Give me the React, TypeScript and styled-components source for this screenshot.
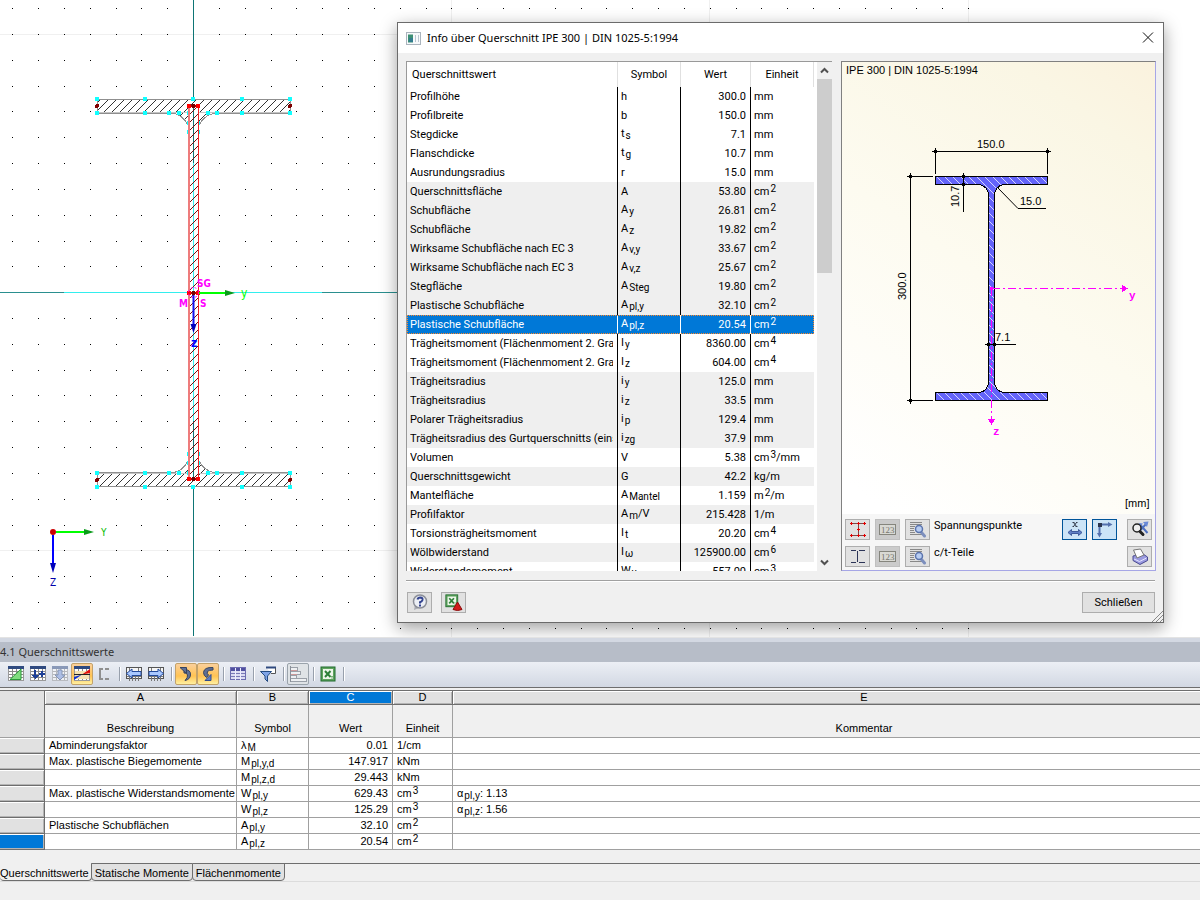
import React from "react";
import styled, { createGlobalStyle, css } from "styled-components";

const UI_FONT = `Roboto, "DejaVu Sans Condensed", sans-serif`;
const TITLE_FONT = `"Noto Sans", "Open Sans", sans-serif`;
const SANS = `"Liberation Sans", Arial, sans-serif`;

const GlobalStyle = createGlobalStyle`
  * { box-sizing: border-box; }
  body { margin: 0; background: #f0f0f0; color: #000; font: 11px/16px ${UI_FONT}; }
  button { font: inherit; color: inherit; margin: 0; padding: 0; }
`;

const Page = styled.div`
  display: flex;
  flex-direction: column;
  min-height: 100vh;
  overflow: hidden;
`;

/* ---------- shared pieces ---------- */

const Sub = styled.sub`
  font-size: 10px;
  line-height: 0;
  vertical-align: -2px;
  margin-left: 1px;
`;
const Sup = styled.sup`
  font-size: 10px;
  line-height: 0;
  vertical-align: 3px;
  margin-left: 1px;
`;

/* "A_pl,z" gives a subscript, "cm^2" a superscript, "|" ends either of them */
function Rich({ text }: { text: string }) {
  const m = text.match(/^([^_^]*)([_^])([^|]*)\|?(.*)$/);
  if (!m) return <>{text}</>;
  const Part = m[2] === "_" ? Sub : Sup;
  return (
    <>
      {m[1]}
      <Part>{m[3]}</Part>
      {m[4]}
    </>
  );
}

/* ---------- drawing area ---------- */

const Workspace = styled.main`
  position: relative;
  flex: 1 0 638px;
  background: #fff;
  border-bottom: 1px solid #e3e3e3;
  overflow: hidden;
`;
const Canvas = styled.svg`
  display: block;
  position: absolute;
  inset: 0;
  width: 100%;
  height: 100%;
`;

const dotsX = Array.from({ length: 38 }, (_, i) => Math.round(193.1 + 25.83 * (i - 7)));
const dotsY = Array.from({ length: 25 }, (_, i) => Math.round(8.15 + 25.82 * i));

const handles: [number, number][] = [
  [97, 99], [145, 99], [193, 99], [242, 99], [290, 99],
  [97, 113], [145, 113], [169, 113], [179, 113], [208, 113], [217, 113], [242, 113], [290, 113],
  [189, 123], [198, 123], [189, 132], [198, 132], [193, 113], [189, 113],
];

const FLANGE = "M97.5 99.5H290.5V113.5H214Q204 115 198.5 126V113.5H188.5V126Q183 115 174 113.5H97.5Z";

function Flange({ hatch }: { hatch: string }) {
  return (
    <g>
      <path d={FLANGE} fill="#fff" />
      <path d={FLANGE} fill={`url(#${hatch})`} stroke="#8f8f8f" />
      <path d="M97 112.5H290" stroke="#c4c4c4" />
      {handles.map(([x, y]) => (
        <rect key={`${x}-${y}`} x={x - 2} y={y - 2} width="4" height="4" fill="#1ff" />
      ))}
      <circle cx="97" cy="106" r="2" fill="#800000" />
      <circle cx="290" cy="106" r="2" fill="#800000" />
    </g>
  );
}

function ModelCanvas() {
  return (
    <Canvas shapeRendering="crispEdges">
      <defs>
        <pattern id="hatch" width="8" height="8" patternUnits="userSpaceOnUse">
          <path d="M-1 9L9 -1M-1 1L1 -1M7 9L9 7" stroke="#333" strokeWidth="1" />
        </pattern>
        <pattern id="hatchMirrored" width="8" height="8" patternUnits="userSpaceOnUse">
          <path d="M-1 -1L9 9M-1 7L1 9M7 -1L9 1" stroke="#333" strokeWidth="1" />
        </pattern>
        <pattern id="webHatch" width="8" height="8" patternUnits="userSpaceOnUse">
          <path d="M-1 9L9 -1M-1 1L1 -1M7 9L9 7" stroke="#7c0a0a" strokeWidth="1" />
        </pattern>
      </defs>
      <path d="M0 34.5H968M0 550.5H968M451.5 0V638M709.5 0V638M968.5 0V638" stroke="#f0f0f0" />
      {dotsX.map((x) => dotsY.map((y) => <rect key={`${x}/${y}`} x={x} y={y} width="1" height="1" />))}
      <path d="M0 292.5H420" stroke="#2a8f8f" />
      <path d="M64 292.5H322" stroke="#3ee" />
      <path d="M193.5 0V636" stroke="#0e7575" />

      <Flange hatch="hatch" />
      <g transform="translate(0 586) scale(1 -1)">
        <Flange hatch="hatchMirrored" />
      </g>

      <rect x="189" y="106" width="9" height="373" fill="#fff" />
      <path d="M193.5 106V163M193.5 421V479" stroke="#0e7575" />
      <path d="M193.5 163V421" stroke="#3ee" />
      <rect x="189" y="106" width="9" height="373" fill="url(#webHatch)" />
      <path d="M189 106V479" stroke="#ee7c7c" strokeWidth="2" />
      <path d="M198.5 106V479" stroke="#e22" />
      {[106, 293, 479].map((y) => (
        <g key={y}>
          <rect x="187" y={y - 2} width="4" height="4" fill="#f00" />
          <rect x="196" y={y - 2} width="4" height="4" fill="#f00" />
          <path d={`M191 ${y}H196`} stroke="#a00" strokeWidth="2" />
          <circle cx="193.5" cy={y} r="2" fill="#700" />
        </g>
      ))}

      <g shapeRendering="auto">
        <circle cx="193.5" cy="292.5" r="5" fill="none" stroke="#f0f" strokeDasharray="2 2" />
        <path d="M199 293H226" stroke="#0f0" strokeWidth="2" />
        <path d="M225 290L235 293L225 296Z" fill="#0a9a1a" />
        <path d="M193.5 295V326" stroke="#11e" strokeWidth="2" />
        <path d="M190.5 324L193.5 333L196.5 324Z" fill="#00b" />
        <path d="M56 532H86" stroke="#0f0" strokeWidth="2" />
        <path d="M84 529L94 532L84 535Z" fill="#0a9a1a" />
        <path d="M53 535V565" stroke="#00f" strokeWidth="2" />
        <path d="M50 563L53 573L56 563Z" fill="#00b" />
        <circle cx="53" cy="532" r="3" fill="#c00" />
      </g>
      <g fontFamily={`"DejaVu Sans Condensed", sans-serif`} fontSize="10">
        <g fill="#f0f" fontWeight="700">
          <text x="197" y="287">SG</text>
          <text x="179" y="307">M</text>
          <text x="200" y="307">S</text>
        </g>
        <text x="241" y="297" fill="#0f0" fontSize="12">y</text>
        <text x="191" y="347" fill="#00f" fontSize="12" fontWeight="700">z</text>
        <text x="101" y="536" fill="#0b0">Y</text>
        <text x="50" y="586" fill="#00a">Z</text>
      </g>
    </Canvas>
  );
}

/* ---------- dialog ---------- */

const Dialog = styled.section`
  position: absolute;
  top: 22px;
  left: 397px;
  right: 36px;
  min-width: 700px;
  background: #f0f0f0;
  border: 1px solid #6b6b6b;
  box-shadow: 0 5px 16px rgba(0, 0, 0, 0.38);
`;
const TitleBar = styled.header`
  display: flex;
  align-items: center;
  height: 30px;
  padding: 0 7px 0 8px;
  background: #fff;
`;
const DialogTitle = styled.h1`
  flex: 1;
  margin: 0 0 0 6px;
  font: 11px/16px ${TITLE_FONT};
`;
const CloseButton = styled.button`
  width: 16px;
  height: 16px;
  border: 0;
  background: none;
  display: grid;
  place-items: center;
`;
const DialogBody = styled.div`
  display: flex;
  gap: 9px;
  padding: 8px 7px 0 8px;
`;
const ListFrame = styled.div`
  flex: 0 0 426px;
  height: 510px;
  display: flex;
  justify-content: space-between;
  overflow: hidden;
  background: #fff;
  border-top: 1px solid #999;
  border-left: 1px solid #999;
`;
const ValueTable = styled.table`
  width: 407px;
  align-self: flex-start;
  table-layout: fixed;
  border-collapse: separate;
  border-spacing: 0;
`;
const HeadCell = styled.th<{ $left?: boolean }>`
  height: 25px;
  padding: 0 5px;
  border-right: 1px solid #e0e0e0;
  font-weight: 400;
  text-align: ${(p) => (p.$left ? "left" : "center")};
`;
const ValueRow = styled.tr<{ $tone: string }>`
  height: 19px;
  background: ${(p) => (p.$tone === "g" ? "#efefef" : "#fff")};
  ${(p) =>
    p.$tone === "s" &&
    css`
      background: #0078d7;
      color: #fff;
      outline: 1px dotted #ff8728;
      outline-offset: -1px;
      td { border-color: #fff; }
    `}
`;
const ValueCell = styled.td<{ $end?: boolean; $last?: boolean; $raised?: boolean }>`
  padding: 0 4px 0 3px;
  border-right: ${(p) => (p.$last ? "0" : "1px solid #000")};
  text-align: ${(p) => (p.$end ? "right" : "left")};
  line-height: ${(p) => (p.$raised ? "17px" : "19px")};
  white-space: nowrap;
  vertical-align: top;
`;
const Clip = styled.div`
  height: 19px;
  overflow: hidden;
`;
const ScrollBar = styled.div`
  width: 15px;
  display: flex;
  flex-direction: column;
  background: #f0f0f0;
`;
const ScrollArrow = styled.button`
  height: 17px;
  border: 0;
  background: none;
  display: grid;
  place-items: center;
`;
const ScrollTrack = styled.div`
  flex: 1;
`;
const ScrollThumb = styled.div`
  height: 194px;
  background: #cdcdcd;
`;

const PreviewFrame = styled.div`
  flex: 1;
  display: flex;
  flex-direction: column;
  background: #f6f6f6;
  border: 1px solid #808080;
  border-right-color: #a6a6e6;
  border-bottom-color: #a6a6e6;
`;
const Preview = styled.svg`
  display: block;
  width: 100%;
  flex: 1;
  background: linear-gradient(35deg, #fff 5%, #fdfbf0 50%, #faf6e4 85%, #faf2de 100%);
`;
const PreviewTools = styled.div`
  display: flex;
  flex-direction: column;
  gap: 6px;
  padding: 5px 3px 3px;
`;
const ToolLine = styled.div`
  display: flex;
  gap: 5px;
`;
const ToolCaption = styled.span`
  flex: 1;
  margin-left: -1px;
  line-height: 14px;
`;
const SmallButton = styled.button<{ $tone?: "on" | "off"; $apart?: boolean }>`
  width: 25px;
  height: 21px;
  margin-left: ${(p) => (p.$apart ? "5px" : "0")};
  display: grid;
  place-items: center;
  background: ${(p) => (p.$tone === "on" ? "#cce4f7" : p.$tone === "off" ? "#cbcbcb" : "#e1e1e1")};
  border: 1px solid ${(p) => (p.$tone === "on" ? "#005499" : p.$tone === "off" ? "#bfbfbf" : "#adadad")};
`;
const DialogFooter = styled.footer`
  display: flex;
  gap: 9px;
  margin: 9px 8px 0;
  padding: 11px 0 9px 1px;
  border-top: 1px solid #a0a0a0;
  box-shadow: inset 0 1px #fff;
`;
const Spacer = styled.div`
  flex: 1;
`;
const TextButton = styled.button`
  width: 73px;
  height: 21px;
  background: #e1e1e1;
  border: 1px solid #adadad;
  line-height: 19px;
`;
const Grip = styled.svg`
  position: absolute;
  right: 0;
  bottom: 0;
`;

const values: [string, string, string, string, string][] = [
  ["Profilhöhe", "h", "300.0", "mm", "w"],
  ["Profilbreite", "b", "150.0", "mm", "w"],
  ["Stegdicke", "t_s", "7.1", "mm", "w"],
  ["Flanschdicke", "t_g", "10.7", "mm", "w"],
  ["Ausrundungsradius", "r", "15.0", "mm", "w"],
  ["Querschnittsfläche", "A", "53.80", "cm^2", "g"],
  ["Schubfläche", "A_y", "26.81", "cm^2", "g"],
  ["Schubfläche", "A_z", "19.82", "cm^2", "g"],
  ["Wirksame Schubfläche nach EC 3", "A_v,y", "33.67", "cm^2", "g"],
  ["Wirksame Schubfläche nach EC 3", "A_v,z", "25.67", "cm^2", "g"],
  ["Stegfläche", "A_Steg", "19.80", "cm^2", "g"],
  ["Plastische Schubfläche", "A_pl,y", "32.10", "cm^2", "g"],
  ["Plastische Schubfläche", "A_pl,z", "20.54", "cm^2", "s"],
  ["Trägheitsmoment (Flächenmoment 2. Grad", "I_y", "8360.00", "cm^4", "w"],
  ["Trägheitsmoment (Flächenmoment 2. Grad", "I_z", "604.00", "cm^4", "w"],
  ["Trägheitsradius", "i_y", "125.0", "mm", "g"],
  ["Trägheitsradius", "i_z", "33.5", "mm", "g"],
  ["Polarer Trägheitsradius", "i_p", "129.4", "mm", "g"],
  ["Trägheitsradius des Gurtquerschnitts (eins", "i_zg", "37.9", "mm", "g"],
  ["Volumen", "V", "5.38", "cm^3|/mm", "w"],
  ["Querschnittsgewicht", "G", "42.2", "kg/m", "g"],
  ["Mantelfläche", "A_Mantel", "1.159", "m^2|/m", "w"],
  ["Profilfaktor", "A_m|/V", "215.428", "1/m", "g"],
  ["Torsionsträgheitsmoment", "I_t", "20.20", "cm^4", "w"],
  ["Wölbwiderstand", "I_ω", "125900.00", "cm^6", "g"],
  ["Widerstandsmoment", "W_y", "557.00", "cm^3", "w"],
];

const dimensionTicks = [[935, 151], [1047, 151], [910, 176], [910, 400], [963, 176], [963, 184], [988, 344], [994, 344]];

function SectionPreview() {
  return (
    <Preview viewBox="842 62 313 452" shapeRendering="crispEdges">
      <defs>
        <pattern id="blueHatch" width="8" height="8" patternUnits="userSpaceOnUse">
          <rect width="8" height="8" fill="#6464fa" />
          <path d="M-1 -1L9 9M-1 7L1 9M7 -1L9 1" stroke="#d4d4ff" strokeWidth="1" shapeRendering="auto" />
        </pattern>
      </defs>
      <path
        d="M935.5 176.5H1047.5V184.5H1003Q995 187 994.5 194.5V383Q996 391 1003 392.5H1047.5V400.5H935.5V392.5H980Q987 391 988.5 383V194.5Q988 187 980 184.5H935.5Z"
        fill="url(#blueHatch)"
        stroke="#000"
      />
      <g stroke="#000" fill="none">
        <path d="M932 151.5H1051M935.5 148V174M1047.5 148V174" />
        <path d="M910.5 173V404M907 176.5H933M907 400.5H933" />
        <path d="M963.5 173V212" />
        <path d="M985 344.5H1016" />
        <path d="M998 188L1018 208.5H1046" shapeRendering="auto" />
      </g>
      {dimensionTicks.map(([x, y]) => (
        <path key={`${x}-${y}`} d={`M${x - 2} ${y + 0.5}L${x + 0.5} ${y - 2}L${x + 3} ${y + 0.5}L${x + 0.5} ${y + 3}Z`} />
      ))}
      <g stroke="#f0f" fill="none">
        <path d="M991.5 288.5H1122" strokeDasharray="8 3 2 3" />
        <path d="M991.5 288V420" strokeDasharray="8 3 2 3" />
      </g>
      <g fill="#f0f">
        <rect x="990" y="287" width="3" height="3" />
        <path d="M1122 285V292L1128 288.5Z" />
        <path d="M988 419H995L991.5 425Z" />
      </g>
      <g fontFamily={SANS} fontSize="11">
        <text x="846" y="74">IPE 300 | DIN 1025-5:1994</text>
        <text x="977" y="148">150.0</text>
        <text x="1020" y="205">15.0</text>
        <text x="995" y="341">7.1</text>
        <text transform="translate(906 300) rotate(-90)">300.0</text>
        <text transform="translate(959 207) rotate(-90)">10.7</text>
        <text x="1125" y="507">[mm]</text>
      </g>
      <g fill="#f0f" fontFamily={`"Liberation Mono", monospace`} fontSize="11" fontWeight="700">
        <text x="1129" y="299">y</text>
        <text x="993" y="435">z</text>
      </g>
    </Preview>
  );
}

const IconStress = () => (
  <svg width="18" height="17" shapeRendering="crispEdges">
    <path d="M1 2.5H17M1 14.5H17M9.5 3V14" stroke="#7a4a4a" fill="none" />
    {[[2, 2], [9, 2], [15, 2], [2, 14], [9, 14], [15, 14], [9, 8]].map(([x, y]) => (
      <path key={`${x}-${y}`} d={`M${x - 1} ${y + 0.5}H${x + 2}M${x + 0.5} ${y - 1}V${y + 2}`} stroke="#e00000" />
    ))}
  </svg>
);
const IconParts = () => (
  <svg width="18" height="17" shapeRendering="crispEdges">
    <path d="M2 2.5H7M10 2.5H16M2 14.5H7M10 14.5H16M8.5 3V14" stroke="#2c3558" fill="none" />
  </svg>
);
const IconNumber = () => (
  <svg width="17" height="12">
    <rect x="0.5" y="0.5" width="16" height="10" fill="#d9d9d4" stroke="#85857d" />
    <text x="2" y="9" fontFamily={`"Liberation Serif", serif`} fontSize="9" fill="#75756d">123</text>
  </svg>
);
const IconDetails = () => (
  <svg width="18" height="17">
    <path d="M1 1.5H13M1 3.5H13M1 5.5H6M1 7.5H5M1 9.5H5M1 11.5H6M1 13.5H13" stroke="#888" fill="none" />
    <path d="M12.5 11.5L15.5 15" stroke="#7d8fbd" strokeWidth="3" strokeLinecap="round" />
    <circle cx="10" cy="8" r="3.5" fill="#b8cdf2" stroke="#5b74ad" strokeWidth="1.5" />
  </svg>
);
const IconDimension = () => (
  <svg width="18" height="17">
    <path d="M7.5 1.5L10.5 5.5M10.5 1.5L7.5 5.5M6.5 1.5H8.5M10 1.5H11.5M6.5 5.5H8M9.5 5.5H11.5" stroke="#333a4a" fill="none" />
    <path d="M2 11.5L5.5 8.5V10.5H12.5V8.5L16 11.5L12.5 14.5V12.5H5.5V14.5Z" fill="#5f7fc6" stroke="#3d5a9c" />
  </svg>
);
const IconAxes = () => (
  <svg width="18" height="17">
    <path d="M4 3.5H13M3.5 4V13" stroke="#5570ae" strokeWidth="2" fill="none" />
    <path d="M12 1L16.5 3.5L12 6ZM1 12L3.5 16.5L6 12Z" fill="#5570ae" />
    <rect x="2" y="2" width="4" height="4" fill="#2c3550" />
  </svg>
);
const IconFit = () => (
  <svg width="18" height="17">
    <path d="M9 3.5L16.5 12M16 2L9.5 9" stroke="#4c6fc0" strokeWidth="2" fill="none" />
    <path d="M12 1L17.5 0.5L16 6ZM8 2L12 2.5L9 6Z" fill="#6a8ad8" />
    <circle cx="6" cy="7" r="4" fill="#f4f4f4" fillOpacity="0.7" stroke="#222" strokeWidth="1.5" />
    <path d="M9 10.5L12 13.5" stroke="#222" strokeWidth="3" strokeLinecap="round" />
  </svg>
);
const IconPrint = () => (
  <svg width="18" height="17">
    <path d="M2 8L12 6L16.5 9V12.5L9 16.5L2 12.5Z" fill="#9a9ae0" stroke="#4a4a90" />
    <path d="M2.5 2L9.5 1L13 7L6 10Z" fill="#fff" stroke="#777" />
    <path d="M3 11L8.5 13.5L15.5 10" stroke="#e5e5ff" fill="none" />
  </svg>
);
const IconHelp = () => (
  <svg width="18" height="17">
    <path d="M4 11L3 16L9 13.5Z" fill="#a9acb4" />
    <circle cx="9" cy="7.5" r="6.5" fill="#eceff5" stroke="#8c8f98" strokeWidth="1.5" />
    <path d="M6.5 5.5Q7 3.5 9.3 3.5Q12 3.7 11.5 6Q11 7.5 9 8.3V9.5M9 10.5V12.5" stroke="#33438f" strokeWidth="2" fill="none" />
  </svg>
);
const ExcelShape = () => (
  <g>
    <rect x="1" y="1" width="14" height="14" fill="#5fa45f" stroke="#1f6b2c" />
    <rect x="3" y="3" width="10" height="10" fill="#eef6ea" />
    <path d="M5 5L10.5 11M10.5 5L5 11" stroke="#2d7f38" strokeWidth="2" />
    <path d="M11 10.5H13M11 12H13" stroke="#7ab07a" />
  </g>
);
const IconExcelExport = () => (
  <svg width="18" height="17">
    <g transform="scale(0.85)">
      <ExcelShape />
    </g>
    <path d="M12.5 8L17 15.5Q12.5 17.5 8 15.5Z" fill="#d21a1a" stroke="#8c0d0d" />
  </svg>
);
const IconWindow = () => (
  <svg width="15" height="13">
    <rect x="0.5" y="0.5" width="14" height="12" fill="#f7f9fb" stroke="#aab4bd" />
    <rect x="2" y="2.5" width="5" height="8" fill="#3d8f74" />
    <rect x="3" y="6" width="4" height="4" fill="#2c6fa0" opacity="0.6" />
    <path d="M9.5 3V10M12.5 3V10" stroke="#b9c6d0" />
  </svg>
);
const Chevron = ({ up }: { up?: boolean }) => (
  <svg width="9" height="7">
    <path d={up ? "M1 5.5L4.5 2L8 5.5" : "M1 1.5L4.5 5L8 1.5"} stroke="#505050" strokeWidth="2" fill="none" />
  </svg>
);

function InfoDialog() {
  return (
    <Dialog role="dialog" aria-label="Info über Querschnitt">
      <TitleBar>
        <IconWindow />
        <DialogTitle>Info über Querschnitt IPE 300 | DIN 1025-5:1994</DialogTitle>
        <CloseButton aria-label="Fenster schließen">
          <svg width="12" height="12">
            <path d="M1 0.5L11 10.5M11 0.5L1 10.5" stroke="#111" />
          </svg>
        </CloseButton>
      </TitleBar>
      <DialogBody>
        <ListFrame>
          <ValueTable>
            <colgroup>
              <col style={{ width: 211 }} />
              <col style={{ width: 63 }} />
              <col style={{ width: 70 }} />
              <col />
            </colgroup>
            <thead>
              <tr>
                <HeadCell $left>Querschnittswert</HeadCell>
                <HeadCell>Symbol</HeadCell>
                <HeadCell>Wert</HeadCell>
                <HeadCell>Einheit</HeadCell>
              </tr>
            </thead>
            <tbody>
              {values.map(([name, symbol, value, unit, tone], i) => (
                <ValueRow key={i} $tone={tone}>
                  <ValueCell><Clip>{name}</Clip></ValueCell>
                  <ValueCell $raised={symbol.includes("_")}><Rich text={symbol} /></ValueCell>
                  <ValueCell $end>{value}</ValueCell>
                  <ValueCell $last><Rich text={unit} /></ValueCell>
                </ValueRow>
              ))}
            </tbody>
          </ValueTable>
          <ScrollBar>
            <ScrollArrow aria-label="Nach oben"><Chevron up /></ScrollArrow>
            <ScrollTrack><ScrollThumb /></ScrollTrack>
            <ScrollArrow aria-label="Nach unten"><Chevron /></ScrollArrow>
          </ScrollBar>
        </ListFrame>
        <PreviewFrame>
          <SectionPreview />
          <PreviewTools>
            <ToolLine>
              <SmallButton aria-label="Spannungspunkte anzeigen"><IconStress /></SmallButton>
              <SmallButton aria-label="Nummern" $tone="off"><IconNumber /></SmallButton>
              <SmallButton aria-label="Details"><IconDetails /></SmallButton>
              <ToolCaption>Spannungspunkte</ToolCaption>
              <SmallButton aria-label="Bemaßung" $tone="on"><IconDimension /></SmallButton>
              <SmallButton aria-label="Achsen" $tone="on"><IconAxes /></SmallButton>
              <SmallButton aria-label="Alles zeigen" $apart><IconFit /></SmallButton>
            </ToolLine>
            <ToolLine>
              <SmallButton aria-label="c/t-Teile anzeigen"><IconParts /></SmallButton>
              <SmallButton aria-label="Nummern" $tone="off"><IconNumber /></SmallButton>
              <SmallButton aria-label="Details"><IconDetails /></SmallButton>
              <ToolCaption>c/t-Teile</ToolCaption>
              <SmallButton aria-label="Drucken"><IconPrint /></SmallButton>
            </ToolLine>
          </PreviewTools>
        </PreviewFrame>
      </DialogBody>
      <DialogFooter>
        <SmallButton aria-label="Hilfe"><IconHelp /></SmallButton>
        <SmallButton aria-label="Excel-Export"><IconExcelExport /></SmallButton>
        <Spacer />
        <TextButton>Schließen</TextButton>
      </DialogFooter>
      <Grip width="12" height="12">
        <path d="M1 12L12 1M5 12L12 5M9 12L12 9" stroke="#888" />
      </Grip>
    </Dialog>
  );
}

/* ---------- table panel ---------- */

const Panel = styled.section`
  border-top: 4px solid #d3d8e2;
`;
const PanelTitle = styled.h2`
  margin: 0;
  height: 20px;
  background: #b7bdc8;
  color: #333;
  font: 11px/20px ${TITLE_FONT};
`;
const Toolbar = styled.div`
  display: flex;
  align-items: center;
  height: 26px;
  padding: 0 5px 1px;
  background: linear-gradient(#eceff5, #d2d8e3);
  border-bottom: 1px solid #6e6e6e;
`;
const ToolButton = styled.button<{ $look?: "active" | "pressed" }>`
  width: 22px;
  height: 22px;
  display: grid;
  place-items: center;
  border: 1px solid transparent;
  border-radius: 2px;
  background: none;
  ${(p) =>
    p.$look === "active" &&
    css`
      background: linear-gradient(#fbd09c, #ffc353 60%, #fff0a0);
      border-color: #c3a26a;
    `}
  ${(p) =>
    p.$look === "pressed" &&
    css`
      background: #dfe3e6;
      border-color: #9aa3ab;
    `}
`;
const ToolSeparator = styled.div`
  width: 8px;
  height: 14px;
  background: linear-gradient(#98a0ac, #98a0ac) 4px 0 / 1px 100% no-repeat, linear-gradient(#fff, #fff) 5px 0 / 1px 100% no-repeat;
`;

const GridScroller = styled.div`
  margin-top: 2px;
  overflow: hidden;
`;
const Grid = styled.table`
  width: calc(100% + 76px);
  table-layout: fixed;
  border-collapse: separate;
  border-spacing: 0;
  border-top: 1px solid #6e6e6e;
  font: 11px/15px ${SANS};
`;
const Letter = styled.th<{ $on?: boolean }>`
  height: 14px;
  padding: 0;
  font-weight: 400;
  line-height: 13px;
  background: ${(p) => (p.$on ? "#0078d7" : "#e1e1e1")};
  color: ${(p) => (p.$on ? "#fff" : "#000")};
  border-right: 1px solid #6e6e6e;
  border-bottom: 1px solid #6e6e6e;
  box-shadow: inset 1px 1px #fff, inset -1px -1px #b4b4b4;
`;
const Corner = styled.th`
  padding: 0;
  background: #e1e1e1;
  border-right: 1px solid #6e6e6e;
  border-bottom: 1px solid #a0a0a0;
`;
const Caption = styled.th`
  height: 33px;
  padding: 0 0 1px;
  vertical-align: bottom;
  font-weight: 400;
  border-right: 1px solid #a0a0a0;
  border-bottom: 1px solid #a0a0a0;
`;
const RowHead = styled.th<{ $on?: boolean }>`
  padding: 0;
  background: ${(p) => (p.$on ? "#0078d7" : "#e1e1e1")};
  border-right: 1px solid #6e6e6e;
  border-bottom: 1px solid #6e6e6e;
  box-shadow: inset 0 1px #fff, inset -1px -1px #b4b4b4;
`;
const Cell = styled.td<{ $end?: boolean }>`
  height: 16px;
  padding: 0 4px;
  overflow: hidden;
  white-space: nowrap;
  vertical-align: top;
  background: #fff;
  text-align: ${(p) => (p.$end ? "right" : "left")};
  border-right: 1px solid #a0a0a0;
  border-bottom: 1px solid #a0a0a0;
`;

const Tabs = styled.nav`
  display: flex;
  margin-top: 13px;
  border-bottom: 1px solid #dcdcdc;
  font: 11px/18px ${SANS};
`;
const Tab = styled.button<{ $active?: boolean }>`
  height: 18px;
  padding: ${(p) => (p.$active ? "0 2px 0 0" : "0 3px")};
  background: ${(p) => (p.$active ? "#f0f0f0" : "#e1e1e1")};
  border: 1px solid #6e6e6e;
  border-left: ${(p) => (p.$active ? "0" : "1px solid #6e6e6e")};
  border-top-color: ${(p) => (p.$active ? "#f0f0f0" : "#6e6e6e")};
  border-radius: 0 0 4px 4px;
  margin-right: -1px;
`;
const TabRest = styled.div`
  flex: 1;
  border-top: 1px solid #6e6e6e;
`;

const rows: [string, string, string, string, string][] = [
  ["Abminderungsfaktor", "λ_M", "0.01", "1/cm", ""],
  ["Max. plastische Biegemomente", "M_pl,y,d", "147.917", "kNm", ""],
  ["", "M_pl,z,d", "29.443", "kNm", ""],
  ["Max. plastische Widerstandsmomente", "W_pl,y", "629.43", "cm^3", "α_pl,y|: 1.13"],
  ["", "W_pl,z", "125.29", "cm^3", "α_pl,z|: 1.56"],
  ["Plastische Schubflächen", "A_pl,y", "32.10", "cm^2", ""],
  ["", "A_pl,z", "20.54", "cm^2", ""],
];

const Sheet = ({ children, faded }: { children?: React.ReactNode; faded?: boolean }) => (
  <svg width="18" height="18" opacity={faded ? 0.5 : 1} shapeRendering="crispEdges">
    <rect x="1.5" y="1.5" width="15" height="14" fill="#fff" stroke="#9a9a9a" />
    <path d="M2 6.5H16M2 9.5H16M2 12.5H16M5.5 4V15M9.5 4V15M13.5 4V15" stroke="#8a8a8a" />
    <rect x="1" y="1" width="16" height="3" fill="#2f4a80" />
    {children}
  </svg>
);
const IconEdit = () => <Sheet><path d="M3 14.5L14 4V14.5Z" fill="#7fdc7f" stroke="#2a9a3a" shapeRendering="auto" /></Sheet>;
const IconInsert = () => (
  <Sheet>
    <path d="M6 5V11M10 9H16M13 6V12" stroke="#1d3f96" strokeWidth="2" fill="none" />
    <path d="M2 10H10L6 14Z" fill="#1d3f96" />
  </Sheet>
);
const IconDown = () => <Sheet faded><path d="M7 5H11V10H14L9 15L4 10H7Z" fill="#7d9be0" stroke="#2f4a80" shapeRendering="auto" /></Sheet>;
const IconDiagram = () => (
  <Sheet>
    <rect x="2" y="6" width="14" height="8" fill="#f4e2b4" />
    <path d="M1 15V12L9 9.5Z" fill="#1030d0" shapeRendering="auto" />
    <path d="M17 4V8L9 9.5Z" fill="#e01010" shapeRendering="auto" />
    <path d="M1 9.5H17" stroke="#222" />
  </Sheet>
);
const IconBracket = () => (
  <svg width="18" height="18" shapeRendering="crispEdges">
    <path d="M5 4H8M10 4H14M5 14H8M10 14H14M5 3V15" stroke="#8f8f8f" strokeWidth="2" fill="none" />
  </svg>
);
const IconMove = ({ right }: { right?: boolean }) => (
  <svg width="18" height="18">
    <g shapeRendering="crispEdges">
      <rect x="1.5" y="2.5" width="15" height="11" fill="#f5f5f5" stroke="#555" />
      <path d="M2 11.5H16M4.5 3V16M7.5 11V16M10.5 11V16M13.5 3V16" stroke="#777" />
    </g>
    <path
      d="M1.5 8.5L7 4V6.5H16V10.5H7V13Z"
      transform={right ? "translate(18 0) scale(-1 1)" : undefined}
      fill="#a9c8ff"
      stroke="#234a9c"
    />
  </svg>
);
const IconTurn = () => (
  <svg width="18" height="18">
    <path d="M7 4.5Q14 4.5 13.5 10Q13 14.5 8 15.5Q11 12.5 10.5 10Q10 7.5 7 8Z" fill="#5f6f94" stroke="#38445f" />
    <path d="M3 2.5H9.5V8.5Z" fill="#5f6f94" stroke="#38445f" />
  </svg>
);
const IconTurnDown = () => (
  <svg width="18" height="18">
    <path d="M14 2.5Q5 2 4.5 7.5Q4.5 10.5 7.5 12.5L9.5 10Q7.5 8.5 8.5 6.5Q9.5 5 14 5Z" fill="#5f6f94" stroke="#38445f" />
    <path d="M12 9.5V15.5H6Z" fill="#5f7fc6" stroke="#2f4a8c" />
  </svg>
);
const IconColumns = () => (
  <svg width="18" height="18" shapeRendering="crispEdges">
    <rect x="1.5" y="2.5" width="15" height="12" fill="#dcdcf2" stroke="#6c6cb0" />
    <path d="M2 4.5H16" stroke="#5050a0" strokeWidth="3" />
    <path d="M2 8.5H16M2 11.5H16" stroke="#7a7ab8" />
    <path d="M6.5 3V15M11.5 3V15" stroke="#eef" />
  </svg>
);
const IconFilter = () => (
  <svg width="18" height="18">
    <path d="M7.5 2.5H16.5V8.5H12" fill="#fff" stroke="#555" />
    <path d="M7 2.5H17" stroke="#2f4a80" strokeWidth="2" />
    <path d="M1.5 6.5H12.5L8.5 11V16.5L6 14V11Z" fill="#7ea3e6" stroke="#234a80" />
  </svg>
);
const IconBars = () => (
  <svg width="18" height="18" shapeRendering="crispEdges">
    <path d="M1.5 1V17" stroke="#8a9099" />
    <path d="M2 2.5H8V5.5H2M2 6.5H11V9.5H2M2 10.5H7V13.5H2M2 13.5H17V16.5H2" stroke="#9aa0a8" fill="#eef0f2" />
    <path d="M2 5.5H8M2 9.5H8" stroke="#c99" />
  </svg>
);
const IconExcel = () => <svg width="16" height="16"><ExcelShape /></svg>;

function TablePanel() {
  return (
    <Panel>
      <PanelTitle>4.1 Querschnittswerte</PanelTitle>
      <Toolbar>
        <ToolButton aria-label="Bearbeiten"><IconEdit /></ToolButton>
        <ToolButton aria-label="Zeile einfügen"><IconInsert /></ToolButton>
        <ToolButton aria-label="Nach unten kopieren"><IconDown /></ToolButton>
        <ToolButton aria-label="Diagramm" $look="active"><IconDiagram /></ToolButton>
        <ToolButton aria-label="Querschnitt"><IconBracket /></ToolButton>
        <ToolSeparator />
        <ToolButton aria-label="Vorherige Tabelle"><IconMove /></ToolButton>
        <ToolButton aria-label="Nächste Tabelle"><IconMove right /></ToolButton>
        <ToolSeparator />
        <ToolButton aria-label="Auswahl zur Grafik" $look="active"><IconTurn /></ToolButton>
        <ToolButton aria-label="Auswahl zur Tabelle" $look="active"><IconTurnDown /></ToolButton>
        <ToolSeparator />
        <ToolButton aria-label="Spalten"><IconColumns /></ToolButton>
        <ToolSeparator />
        <ToolButton aria-label="Filter"><IconFilter /></ToolButton>
        <ToolSeparator />
        <ToolButton aria-label="Balken" $look="pressed"><IconBars /></ToolButton>
        <ToolSeparator />
        <ToolButton aria-label="Excel"><IconExcel /></ToolButton>
        <ToolSeparator />
      </Toolbar>
      <GridScroller>
        <Grid>
          <colgroup>
            <col style={{ width: 45 }} />
            <col style={{ width: 192 }} />
            <col style={{ width: 72 }} />
            <col style={{ width: 84 }} />
            <col style={{ width: 60 }} />
            <col />
          </colgroup>
          <thead>
            <tr>
              <Corner rowSpan={2} />
              {["A", "B", "C", "D", "E"].map((l) => (
                <Letter key={l} $on={l === "C"}>{l}</Letter>
              ))}
            </tr>
            <tr>
              {["Beschreibung", "Symbol", "Wert", "Einheit", "Kommentar"].map((c) => (
                <Caption key={c}>{c}</Caption>
              ))}
            </tr>
          </thead>
          <tbody>
            {rows.map(([name, symbol, value, unit, note], i) => (
              <tr key={i}>
                <RowHead $on={i === rows.length - 1} />
                <Cell>{name}</Cell>
                <Cell><Rich text={symbol} /></Cell>
                <Cell $end>{value}</Cell>
                <Cell><Rich text={unit} /></Cell>
                <Cell><Rich text={note} /></Cell>
              </tr>
            ))}
          </tbody>
        </Grid>
      </GridScroller>
      <Tabs>
        <Tab $active>Querschnittswerte</Tab>
        <Tab>Statische Momente</Tab>
        <Tab>Flächenmomente</Tab>
        <TabRest />
      </Tabs>
    </Panel>
  );
}

const StatusArea = styled.div`
  height: 18px;
`;

export default function App() {
  return (
    <Page>
      <GlobalStyle />
      <Workspace>
        <ModelCanvas />
        <InfoDialog />
      </Workspace>
      <TablePanel />
      <StatusArea />
    </Page>
  );
}
